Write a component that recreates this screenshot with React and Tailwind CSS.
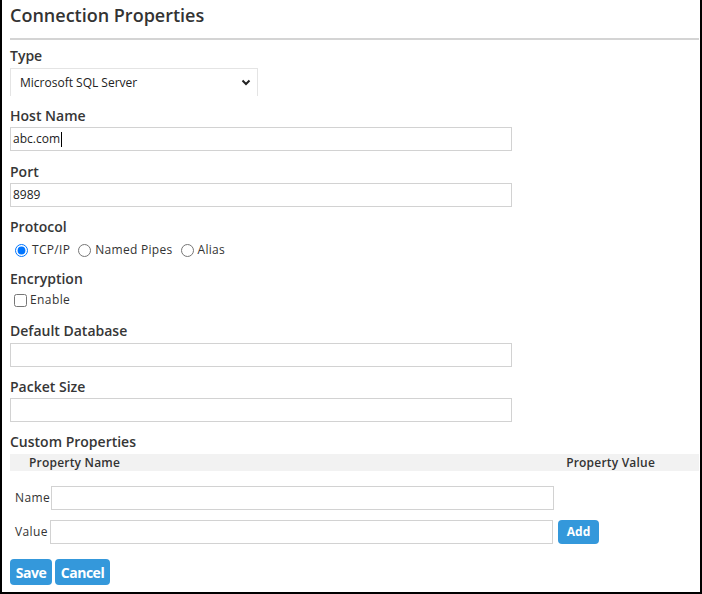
import { useState } from "react";

const font = { fontFamily: '"Open Sans", "Noto Sans", sans-serif' };

function Label({ children, className = "" }) {
  return (
    <div className={"text-[14px] leading-[20px] font-semibold text-[#363636] " + className}>
      {children}
    </div>
  );
}

function TextInput({ value, className = "", cursor = false }) {
  return (
    <div
      className={
        "h-[24px] border border-[#d2d2d2] bg-white flex items-center px-[2px] text-[12px] text-[#222] " +
        className
      }
    >
      <span>{value}</span>
      {cursor && <span className="w-px h-[15px] bg-black ml-px" />}
    </div>
  );
}

export default function App() {
  const [protocol, setProtocol] = useState("tcp");
  const [encrypt, setEncrypt] = useState(false);

  const radios = [
    { id: "tcp", label: "TCP/IP" },
    { id: "pipes", label: "Named Pipes" },
    { id: "alias", label: "Alias" },
  ];

  return (
    <div
      className="w-[702px] h-[594px] bg-white border-l-2 border-r-2 border-b-2 border-black overflow-hidden"
      style={font}
    >
      <div className="pl-[8px] pr-[1px]">
        {/* HEADER */}
        <h2 className="text-[18px] leading-[24px] font-semibold text-[#333] mt-[3px]">
          Connection Properties
        </h2>
        <div className="h-[2px] bg-[#d4d4d4] mt-[11px]" />

        {/* TYPE */}
        <Label className="mt-[6px]">Type</Label>
        <div className="mt-[2px] w-[248px] h-[28px] border-t border-x border-[#e4e4e4] flex items-center justify-between pl-[9px] pr-[5px]">
          <span className="text-[12px] text-[#222]">Microsoft SQL Server</span>
          <svg width="10" height="7" viewBox="0 0 10 7" className="mr-[1px]">
            <path d="M1.5 1.5 L5 5 L8.5 1.5" fill="none" stroke="#222" strokeWidth="2" />
          </svg>
        </div>

        <Label className="mt-[10px]">Host Name</Label>
        <TextInput value="abc.com" cursor className="mt-[1px] w-[502px]" />

        <Label className="mt-[11px]">Port</Label>
        <TextInput value="8989" className="mt-[1px] w-[502px]" />

        {/* PROTOCOL */}
        <Label className="mt-[10px]">Protocol</Label>
        <div className="mt-[4px] h-[18px] flex items-center pl-[5px] text-[12px] tracking-[0.3px] text-[#333]">
          {radios.map((r) => (
            <label key={r.id} className="flex items-center mr-[8px]">
              <input
                type="radio"
                name="protocol"
                checked={protocol === r.id}
                onChange={() => setProtocol(r.id)}
                className="w-[13px] h-[13px] m-0 mr-[4px]"
              />
              {r.label}
            </label>
          ))}
        </div>

        <Label className="mt-[10px]">Encryption</Label>
        <label className="mt-[2px] h-[18px] flex items-center pl-[4px] text-[12px] tracking-[0.4px] text-[#333]">
          <input
            type="checkbox"
            checked={encrypt}
            onChange={() => setEncrypt(!encrypt)}
            className="w-[13px] h-[13px] m-0 mr-[3px]"
          />
          Enable
        </label>

        <Label className="mt-[12px]">Default Database</Label>
        <TextInput value="" className="mt-[2px] w-[502px]" />

        <Label className="mt-[10px]">Packet Size</Label>
        <TextInput value="" className="mt-[1px] w-[502px]" />

        {/* CUSTOM PROPERTIES */}
        <Label className="mt-[10px]">Custom Properties</Label>
        <div className="mt-[2px] h-[17px] bg-[#f2f2f2] flex items-center text-[12px] font-semibold tracking-[0.2px] text-[#333]">
          <span className="ml-[19px]">Property Name</span>
          <span className="ml-auto mr-[44px]">Property Value</span>
        </div>

        <div className="mt-[15px] flex items-center">
          <span className="w-[41px] pl-[5px] text-[12px] tracking-[0.4px] text-[#333]">Name</span>
          <TextInput value="" className="w-[503px]" />
        </div>

        <div className="mt-[10px] flex items-center">
          <span className="w-[40px] pl-[5px] text-[12px] tracking-[0.4px] text-[#333]">Value</span>
          <TextInput value="" className="w-[503px]" />
          <button className="ml-[5px] w-[41px] h-[24px] rounded-[4px] bg-[#3498db] text-white text-[12px] font-bold">
            Add
          </button>
        </div>

        <div className="mt-[15px] flex gap-[3px]">
          <button className="w-[42px] h-[26px] rounded-[4px] bg-[#3498db] text-white text-[14px] font-bold tracking-[-0.5px]">
            Save
          </button>
          <button className="w-[55px] h-[26px] rounded-[4px] bg-[#3498db] text-white text-[14px] font-bold tracking-[-0.5px]">
            Cancel
          </button>
        </div>
      </div>
    </div>
  );
}
